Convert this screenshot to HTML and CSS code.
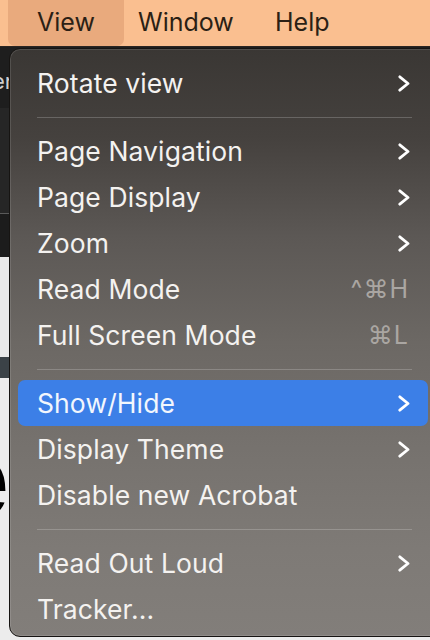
FILE: index.html
```html
<!DOCTYPE html>
<html>
<head>
<meta charset="utf-8">
<link rel="stylesheet" href="styles.css">
</head>
<body>
<div class="menubar">
  <div class="mb-item active">View</div>
  <div class="mb-item win">Window</div>
  <div class="mb-item">Help</div>
</div>
<div class="backdrop">
  <div class="bd bd1"><span class="frag">er</span></div>
  <div class="bd bd2"></div>
  <div class="bd bd3"></div>
  <div class="bd bd4"></div>
  <div class="bd bd5"></div>
  <div class="bd bd6"><span class="bigglyph">e</span></div>
</div>
<div class="menu">
  <div class="row"><span class="label">Rotate view</span><svg class="chev" viewBox="0 0 12 17"><path d="M1.8 1.8 L10 8.5 L1.8 15.2"/></svg></div>
  <div class="sep"></div>
  <div class="row"><span class="label">Page Navigation</span><svg class="chev" viewBox="0 0 12 17"><path d="M1.8 1.8 L10 8.5 L1.8 15.2"/></svg></div>
  <div class="row"><span class="label">Page Display</span><svg class="chev" viewBox="0 0 12 17"><path d="M1.8 1.8 L10 8.5 L1.8 15.2"/></svg></div>
  <div class="row"><span class="label">Zoom</span><svg class="chev" viewBox="0 0 12 17"><path d="M1.8 1.8 L10 8.5 L1.8 15.2"/></svg></div>
  <div class="row"><span class="label">Read Mode</span><span class="short">^⌘H</span></div>
  <div class="row"><span class="label">Full Screen Mode</span><span class="short">⌘L</span></div>
  <div class="sep"></div>
  <div class="row selected"><span class="label">Show/Hide</span><svg class="chev" viewBox="0 0 12 17"><path d="M1.8 1.8 L10 8.5 L1.8 15.2"/></svg></div>
  <div class="row"><span class="label">Display Theme</span><svg class="chev" viewBox="0 0 12 17"><path d="M1.8 1.8 L10 8.5 L1.8 15.2"/></svg></div>
  <div class="row"><span class="label">Disable new Acrobat</span></div>
  <div class="sep"></div>
  <div class="row"><span class="label">Read Out Loud</span><svg class="chev" viewBox="0 0 12 17"><path d="M1.8 1.8 L10 8.5 L1.8 15.2"/></svg></div>
  <div class="row"><span class="label">Tracker...</span></div>
</div>
</body>
</html>
```
FILE: styles.css
```css
html, body {
  margin: 0;
  padding: 0;
  width: 430px;
  height: 640px;
  overflow: hidden;
  font-family: Inter, "Noto Sans", sans-serif;
  background: #ececec;
}
.menubar {
  height: 46px;
  background: #fabf90;
  display: flex;
  align-items: stretch;
  padding-left: 8px;
  border-bottom: 1px solid #2a2522;
}
.mb-item {
  font-size: 25px;
  color: #2b1f15;
  display: flex;
  align-items: center;
  padding-bottom: 2px;
}
.mb-item.active {
  width: 116px;
  box-sizing: border-box;
  padding-left: 29px;
  background: #e9aa7d;
  border-radius: 0 0 7px 7px;
}
.mb-item.win {
  margin-left: 14px;
  width: 137px;
}
.backdrop {
  display: flex;
  flex-direction: column;
}
.bd { overflow: hidden; position: relative; }
.bd1 { height: 61px; background: #1e1e1e; }
.frag {
  display: block;
  margin-left: -8px;
  margin-top: 22px;
  font-size: 22px;
  color: #cfcfcf;
  line-height: 24px;
}
.bd2 { height: 105px; background: #262626; border-bottom: 1px solid #5a5a5a; }
.bd3 { height: 43px; background: #1c1c1c; }
.bd4 { height: 100px; background: #e9e9e9; }
.bd5 { height: 21px; background: #3b4247; }
.bd6 { height: 262px; background: #ececec; }
.bigglyph {
  position: absolute;
  left: -52px;
  top: 46px;
  font-size: 110px;
  font-weight: 800;
  line-height: 110px;
  color: #000;
  font-family: "Liberation Sans", sans-serif;
}
.menu {
  position: absolute;
  left: 9px;
  top: 48px;
  width: 440px;
  height: 589px;
  box-sizing: border-box;
  padding: 11px 0 6px 0;
  border-radius: 11px;
  border: 1px solid #161412;
  box-shadow: inset 0 0 0 1px rgba(255,255,255,0.12);
  background: linear-gradient(180deg, #3a3734 0%, #45413e 15%, #5c5855 32%, #6c6864 50%, #76726e 68%, #7e7a76 85%, #827e7a 100%);
}
.row {
  height: 46px;
  display: flex;
  align-items: center;
  padding-left: 27px;
  width: 373px;
  color: #f4f2f0;
  font-size: 26.5px;
  letter-spacing: 0.1px;
  position: relative;
}
.row .label { flex: 1; }
.short {
  color: #aaa6a2;
  font-size: 25px;
  letter-spacing: 1px;
  margin-right: 1px;
}
.chev {
  width: 12px;
  height: 17px;
  fill: none;
  stroke: #ffffff;
  stroke-width: 2.8;
  stroke-linecap: round;
  stroke-linejoin: round;
}
.row.selected {
  margin-left: 8px;
  padding-left: 19px;
  width: 373px;
  padding-right: 18px;
  background: #3c7fe7;
  border-radius: 7px;
  color: #f2f6fd;
}
.sep {
  height: 1px;
  margin: 11px 0 10px 27px;
  width: 375px;
  background: rgba(255,255,255,0.2);
}
```
